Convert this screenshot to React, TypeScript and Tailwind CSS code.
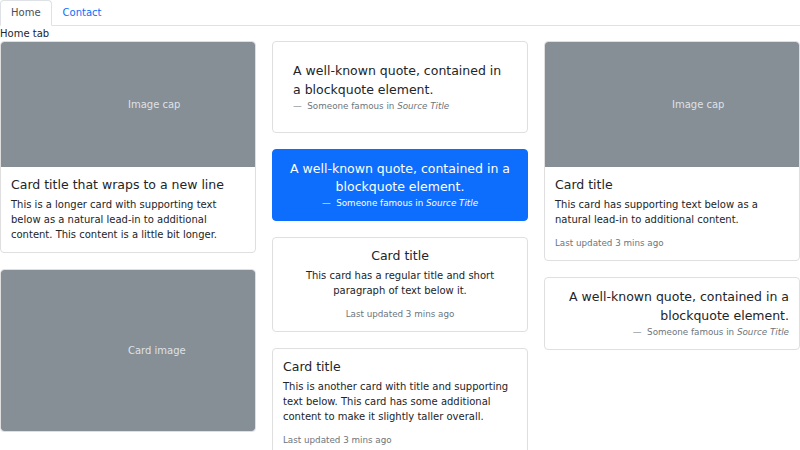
import React from "react";

/* ---------- placeholder image ---------- */
function Placeholder({ label, h, rounded }: { label: string; h: number; rounded: string }) {
  return (
    <svg className={`block w-full ${rounded}`} height={h} role="img" aria-label={label}>
      <rect width="100%" height="100%" fill="#868e96" />
      <text x="50%" y="50%" dy=".3em" fill="#dee2e6" fontSize="10" fontFamily="DejaVu Sans, sans-serif">
        {label}
      </text>
    </svg>
  );
}

function Card({
  className = "",
  tone = "bg-white border-[#dfdfdf]",
  children,
}: {
  className?: string;
  tone?: string;
  children: React.ReactNode;
}) {
  return <div className={`rounded-[4px] border overflow-hidden ${tone} ${className}`}>{children}</div>;
}

const title = "text-[12.5px] leading-[15px] mb-[5px]";
const text = "text-[10px] leading-[15px]";
const small = "text-[8.75px] leading-[13.125px] text-[#6c757d]";

function Quote({ footerCls = "text-[#6c757d]" }: { footerCls?: string }) {
  return (
    <figure>
      <blockquote className="text-[12.5px] leading-[18.75px]">
        <p>A well-known quote, contained in a blockquote element.</p>
      </blockquote>
      <figcaption className={`text-[8.75px] leading-[13.125px] ${footerCls}`}>
        —&nbsp; Someone famous in <cite className="italic">Source Title</cite>
      </figcaption>
    </figure>
  );
}

export default function App() {
  return (
    <div className="w-[800px] h-[450px] overflow-hidden bg-white text-[#212529] font-['DejaVu_Sans',sans-serif] text-[10px] leading-[15px]">
      {/* tabs */}
      <div className="flex border-b border-[#dee2e6]">
        <div className="-mb-px px-[10px] pt-[4px] pb-[5px] border border-[#dee2e6] border-b-white bg-white rounded-t-[4px] text-[#495057]">
          Home
        </div>
        <div className="-mb-px px-[10px] pt-[4px] pb-[5px] border border-transparent text-[#0d6efd]">Contact</div>
      </div>
      <div>Home tab</div>

      <div className="flex gap-4">
        {/* column 1 */}
        <div className="w-[256px] flex flex-col gap-4">
          <Card>
            <Placeholder label="Image cap" h={125} rounded="rounded-t-[3px]" />
            <div className="p-[10px]">
              <h5 className={title}>Card title that wraps to a new line</h5>
              <p className={text}>
                This is a longer card with supporting text below as a natural lead-in to additional content. This
                content is a little bit longer.
              </p>
            </div>
          </Card>
          <Card>
            <Placeholder label="Card image" h={161} rounded="rounded-[3px]" />
          </Card>
        </div>

        {/* column 2 */}
        <div className="w-[256px] flex flex-col gap-4">
          <Card className="px-[20px] pt-[20px] pb-[19px]">
            <Quote />
          </Card>
          <Card className="p-[10px] text-center" tone="bg-[#0d6efd] border-[#0d6efd] text-white">
            <Quote footerCls="text-white" />
          </Card>
          <Card className="text-center">
            <div className="p-[10px]">
              <h5 className={title}>Card title</h5>
              <p className={`${text} mb-[10px]`}>This card has a regular title and short paragraph of text below it.</p>
              <p className={small}>Last updated 3 mins ago</p>
            </div>
          </Card>
          <Card>
            <div className="p-[10px]">
              <h5 className={title}>Card title</h5>
              <p className={`${text} mb-[10px]`}>
                This is another card with title and supporting text below. This card has some additional content to
                make it slightly taller overall.
              </p>
              <p className={small}>Last updated 3 mins ago</p>
            </div>
          </Card>
        </div>

        {/* column 3 */}
        <div className="w-[256px] flex flex-col gap-4">
          <Card>
            <Placeholder label="Image cap" h={125} rounded="rounded-t-[3px]" />
            <div className="p-[10px]">
              <h5 className={title}>Card title</h5>
              <p className={`${text} mb-[10px]`}>
                This card has supporting text below as a natural lead-in to additional content.
              </p>
              <p className={small}>Last updated 3 mins ago</p>
            </div>
          </Card>
          <Card className="p-[10px] text-right">
            <Quote />
          </Card>
        </div>
      </div>
    </div>
  );
}
